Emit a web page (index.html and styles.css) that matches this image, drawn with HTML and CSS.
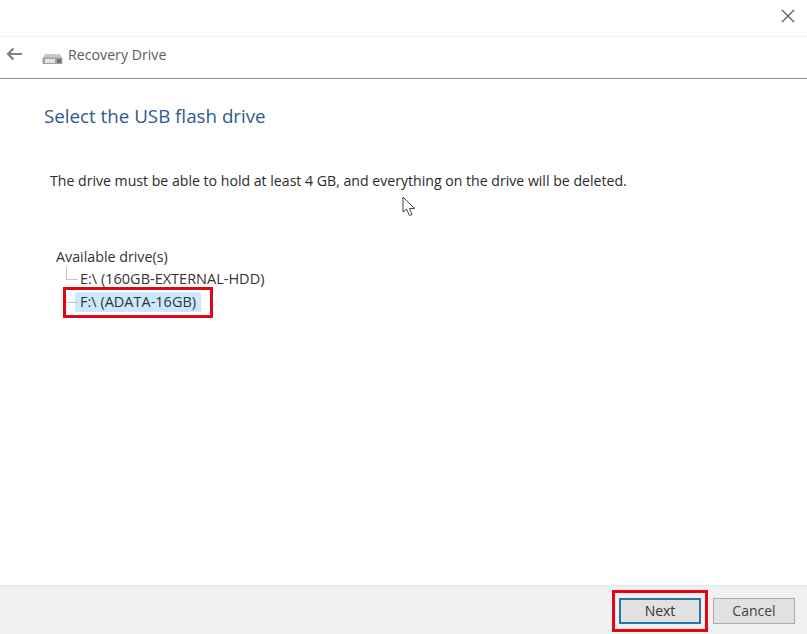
FILE: index.html
```html
<!DOCTYPE html>
<html lang="en">
<head>
<meta charset="utf-8">
<title>Recovery Drive</title>
<link rel="stylesheet" href="styles.css">
</head>
<body>
<div class="window">
  <div class="titlebar">
    <svg class="close" width="14" height="14" viewBox="0 0 14 14"><path d="M1 1L13 13M13 1L1 13" stroke="#555" stroke-width="1.1" fill="none"/></svg>
  </div>
  <div class="navbar">
    <svg class="back" width="17" height="14" viewBox="0 0 17 14"><path d="M16 7H2M7.500 1.500L2 7l5.500 5.500" stroke="#808080" stroke-width="2.200" fill="none"/></svg>
    <svg class="drive" width="21" height="12" viewBox="0 0 21 12"><path d="M3.500 1H17.500L20.500 5.500V11H.5V5.500Z" fill="#a3a3a3"/><path d="M3.500 1H17.500L19.500 4.500H1.500Z" fill="#c9c9c9"/><rect x="3" y="6" width="10" height="4" fill="#e4e4e4"/><rect x="15" y="6" width="4" height="4" fill="#6f6f6f"/></svg>
    <span class="nav-title">Recovery Drive</span>
  </div>
  <main class="content">
    <h1 class="heading">Select the USB flash drive</h1>
    <p class="intro">The drive must be able to hold at least 4 GB, and everything on the drive will be deleted.</p>
    <div class="tree">
      <div class="tree-root">Available drive(s)</div>
      <ul class="tree-list">
        <li class="tree-item"><span class="label">E:\ (160GB-EXTERNAL-HDD)</span></li>
        <li class="tree-item"><span class="label selected">F:\ (ADATA-16GB)</span></li>
      </ul>
      <div class="mark mark-drive"></div>
    </div>
    <svg class="cursor" width="14" height="21" viewBox="0 0 14 21"><path d="M1 1V16L4.500 13L7.500 19.500L10 18.500L7.500 12.500H12.500Z" fill="#fff" stroke="#444" stroke-width="1"/></svg>
  </main>
  <footer class="footer">
    <div class="next-wrap">
      <button class="btn btn-primary" type="button">Next</button>
      <div class="mark mark-next"></div>
    </div>
    <button class="btn" type="button">Cancel</button>
  </footer>
</div>
</body>
</html>
```
FILE: styles.css
```css
* { box-sizing: border-box; }
html, body { margin: 0; height: 100%; }
body { background: #fff; font-family: "Open Sans", "Noto Sans", sans-serif; color: #2b2b2b; overflow: hidden; }
.window { display: flex; flex-direction: column; height: 634px; width: 807px; }
.titlebar { height: 37px; display: flex; justify-content: flex-end; align-items: flex-start; padding: 9px 12px 0 0; border-bottom: 1px solid #f3f3f3; flex: none; }
.navbar { height: 42px; display: flex; align-items: center; padding: 0 0 3px 6px; border-bottom: 1px solid #8e8e8e; flex: none; }
.back { margin-top: -4px; }
.drive { margin: 5px 0 0 19px; }
.nav-title { font-size: 14.200px; color: #5c5c5c; margin: -4px 0 0 5px; }
.content { position: relative; flex: 1; padding: 24px 0 0 44px; }
.heading { margin: 0; font-size: 18.750px; font-weight: 400; line-height: 26px; color: #2f5a8c; }
.intro { margin: 42px 0 0 6px; font-size: 14.120px; line-height: 20px; color: #2b2b2b; white-space: nowrap; }
.tree { position: relative; margin: 55px 0 0 12px; font-size: 14.500px; color: #333; }
.tree-root { line-height: 21px; font-size: 14.250px; }
.tree-list { list-style: none; margin: 0; padding: 0 0 0 8px; }
.tree-item { position: relative; height: 23px; display: flex; align-items: center; padding-left: 16px; }
.tree-item::before { content: ""; position: absolute; left: 2px; width: 12px; top: 50%; border-top: 1px solid #c4c4c4; }
.tree-item:first-child::after { content: ""; position: absolute; left: 2px; top: 0; height: 12px; border-left: 1px solid #c4c4c4; }
.label { padding: 0 3px 0 0; line-height: 20px; }
.selected { background: #cce8ff; padding-left: 5px; margin-left: -5px; padding-right: 5px; }
.mark { position: absolute; border: 3px solid #e00612; pointer-events: none; }
.mark-drive { left: 7px; top: 41px; width: 150px; height: 31px; }
.cursor { position: absolute; left: 402px; top: 117px; }
.footer { height: 49px; flex: none; background: #f0f0f0; border-top: 1px solid #e4e4e4; display: flex; justify-content: flex-end; align-items: center; gap: 12px; padding: 2px 12px 0 0; }
.next-wrap { position: relative; display: flex; }
.btn { width: 82px; height: 26px; padding: 0 0 2px; background: #e1e1e1; border: 1px solid #adadad; font: inherit; font-size: 14px; color: #444; }
.btn-primary { width: 82px; border: 2px solid #2a74ad; color: #333; }
.mark-next { left: -7px; top: -8px; width: 96px; height: 42px; }
```
